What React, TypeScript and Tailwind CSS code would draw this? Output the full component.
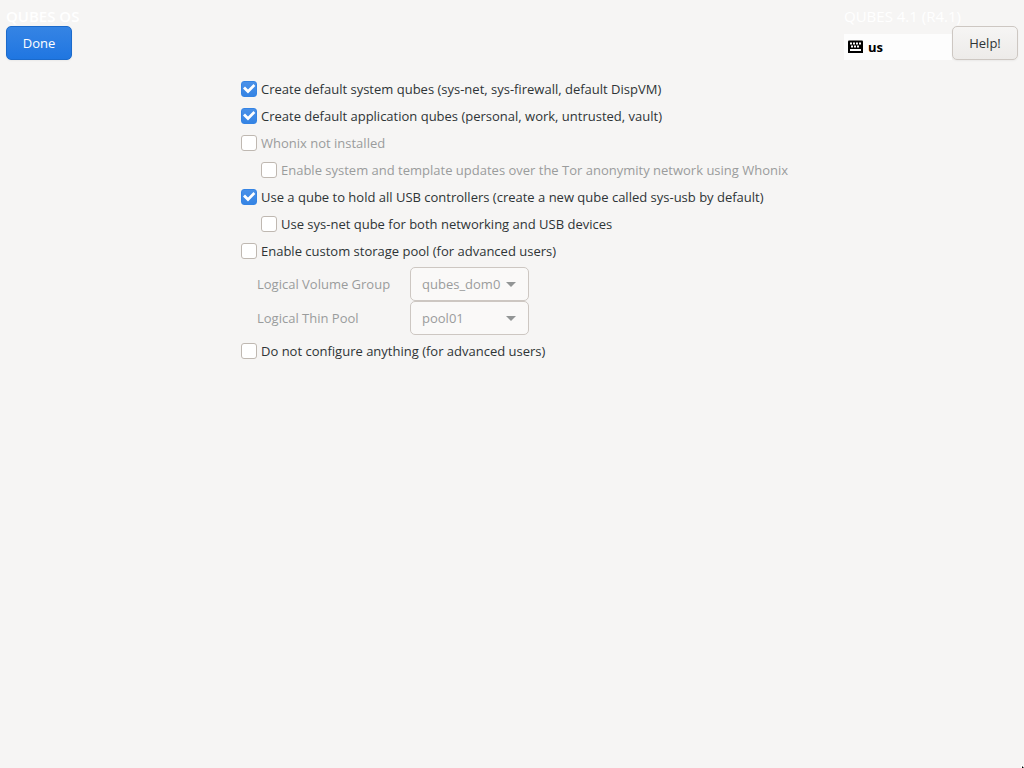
import { useState } from "react";
import type { ReactNode } from "react";

function Check({ label, checked = false, disabled = false, indent = false }: { label: string; checked?: boolean; disabled?: boolean; indent?: boolean }) {
  const [on, setOn] = useState(checked);
  return (
    <label className={`flex h-[27px] items-center gap-1 whitespace-nowrap ${indent ? "pl-5" : ""} ${disabled ? "text-[#9a9c9c]" : "text-[#2e3436]"}`}>
      <span className="relative flex size-4 shrink-0">
        <input
          type="checkbox"
          checked={on}
          disabled={disabled}
          onChange={() => setOn(!on)}
          className="peer size-4 appearance-none rounded-[3px] border border-[#bfb8b1] bg-white checked:border-[#3584e4] checked:bg-linear-to-b checked:from-[#4a91e8] checked:to-[#3584e4]"
        />
        <svg viewBox="0 0 16 16" className="pointer-events-none absolute inset-0 hidden size-4 peer-checked:block" aria-hidden="true">
          <path d="M2 7.5 L4 5.5 L7 8.5 L12.5 3 L14.3 5 L7 12.5 Z" fill="#fff" />
        </svg>
      </span>
      <span>{label}</span>
    </label>
  );
}

function PoolRow({ id, label, value }: { id: string; label: string; value: string }) {
  return (
    <>
      <label htmlFor={id} className="whitespace-nowrap">{label}</label>
      <span className="relative flex">
        <select id={id} disabled className="h-[34px] w-full appearance-none rounded-[5px] border border-[#cdc7c2] bg-[#faf9f8] pr-6 pl-[11px] text-[#9a9c9c] opacity-100">
          <option>{value}</option>
        </select>
        <svg viewBox="0 0 10 5" className="pointer-events-none absolute top-[15px] right-[13px] h-[5px] w-[10px]" aria-hidden="true">
          <path d="M0 0H10L5 5Z" fill="#929595" />
        </svg>
      </span>
    </>
  );
}

function Title({ children, bold = false }: { children: ReactNode; bold?: boolean }) {
  return <h1 className={`h-5 text-[15px] leading-5 whitespace-nowrap text-white ${bold ? "font-semibold" : ""}`}>{children}</h1>;
}

export default function App() {
  return (
    <div className="min-h-screen bg-[#f6f5f4] font-['Open_Sans','Noto_Sans',sans-serif] text-[13px] leading-5 text-[#2e3436]">
      <header className="flex justify-between px-1.5 pt-1.5">
        <div>
          <Title bold>QUBES OS</Title>
          <button className="h-[34px] w-[66px] rounded-[5px] border border-[#1b6acb] bg-linear-to-t from-[#1f76e1] to-[#3584e4] text-white shadow-xs">Done</button>
        </div>
        <div className="w-[174px]">
          <Title>QUBES 4.1 (R4.1)</Title>
          <div className="flex items-end">
            <div className="flex h-[26px] flex-1 items-center gap-1 bg-[#fdfdfd] pl-1 font-bold text-black">
              <svg viewBox="0 0 16 14" className="h-[14px] w-4" aria-hidden="true">
                <path d="M0 1.5Q0 .5 1 .5H14Q15 .5 15 1.5V13H0Z" fill="#000" />
                <path d="M2 3.5H13M3 6.5H12" stroke="#fff" strokeWidth="2" strokeDasharray="2 1" />
                <path d="M2 10H13" stroke="#fff" strokeWidth="2" />
              </svg>
              us
            </div>
            <button className="h-[34px] w-[66px] rounded-[5px] border border-[#cdc7c2] bg-linear-to-t from-[#edebe9] to-[#f6f5f4] shadow-xs">Help!</button>
          </div>
        </div>
      </header>
      <main className="mx-auto mt-[15px] max-w-[542px]">
        <Check checked label="Create default system qubes (sys-net, sys-firewall, default DispVM)" />
        <Check checked label="Create default application qubes (personal, work, untrusted, vault)" />
        <Check disabled label="Whonix not installed" />
        <Check disabled indent label="Enable system and template updates over the Tor anonymity network using Whonix" />
        <Check checked label="Use a qube to hold all USB controllers (create a new qube called sys-usb by default)" />
        <Check indent label="Use sys-net qube for both networking and USB devices" />
        <Check label="Enable custom storage pool (for advanced users)" />
        <div className="mt-[3px] mb-0.5 grid w-fit grid-cols-[133px_119px] items-center gap-x-5 pl-4 text-[#9a9c9c]">
          <PoolRow id="lvg" label="Logical Volume Group" value="qubes_dom0" />
          <PoolRow id="ltp" label="Logical Thin Pool" value="pool01" />
        </div>
        <Check label="Do not configure anything (for advanced users)" />
      </main>
      <svg viewBox="0 0 3 3" className="pointer-events-none fixed right-0 bottom-0 size-[3px]" aria-hidden="true">
        <path d="M0 0H1L3 2V3H0Z" fill="#fff" />
        <path d="M1 1L3 3H1Z" fill="#000" />
      </svg>
    </div>
  );
}
